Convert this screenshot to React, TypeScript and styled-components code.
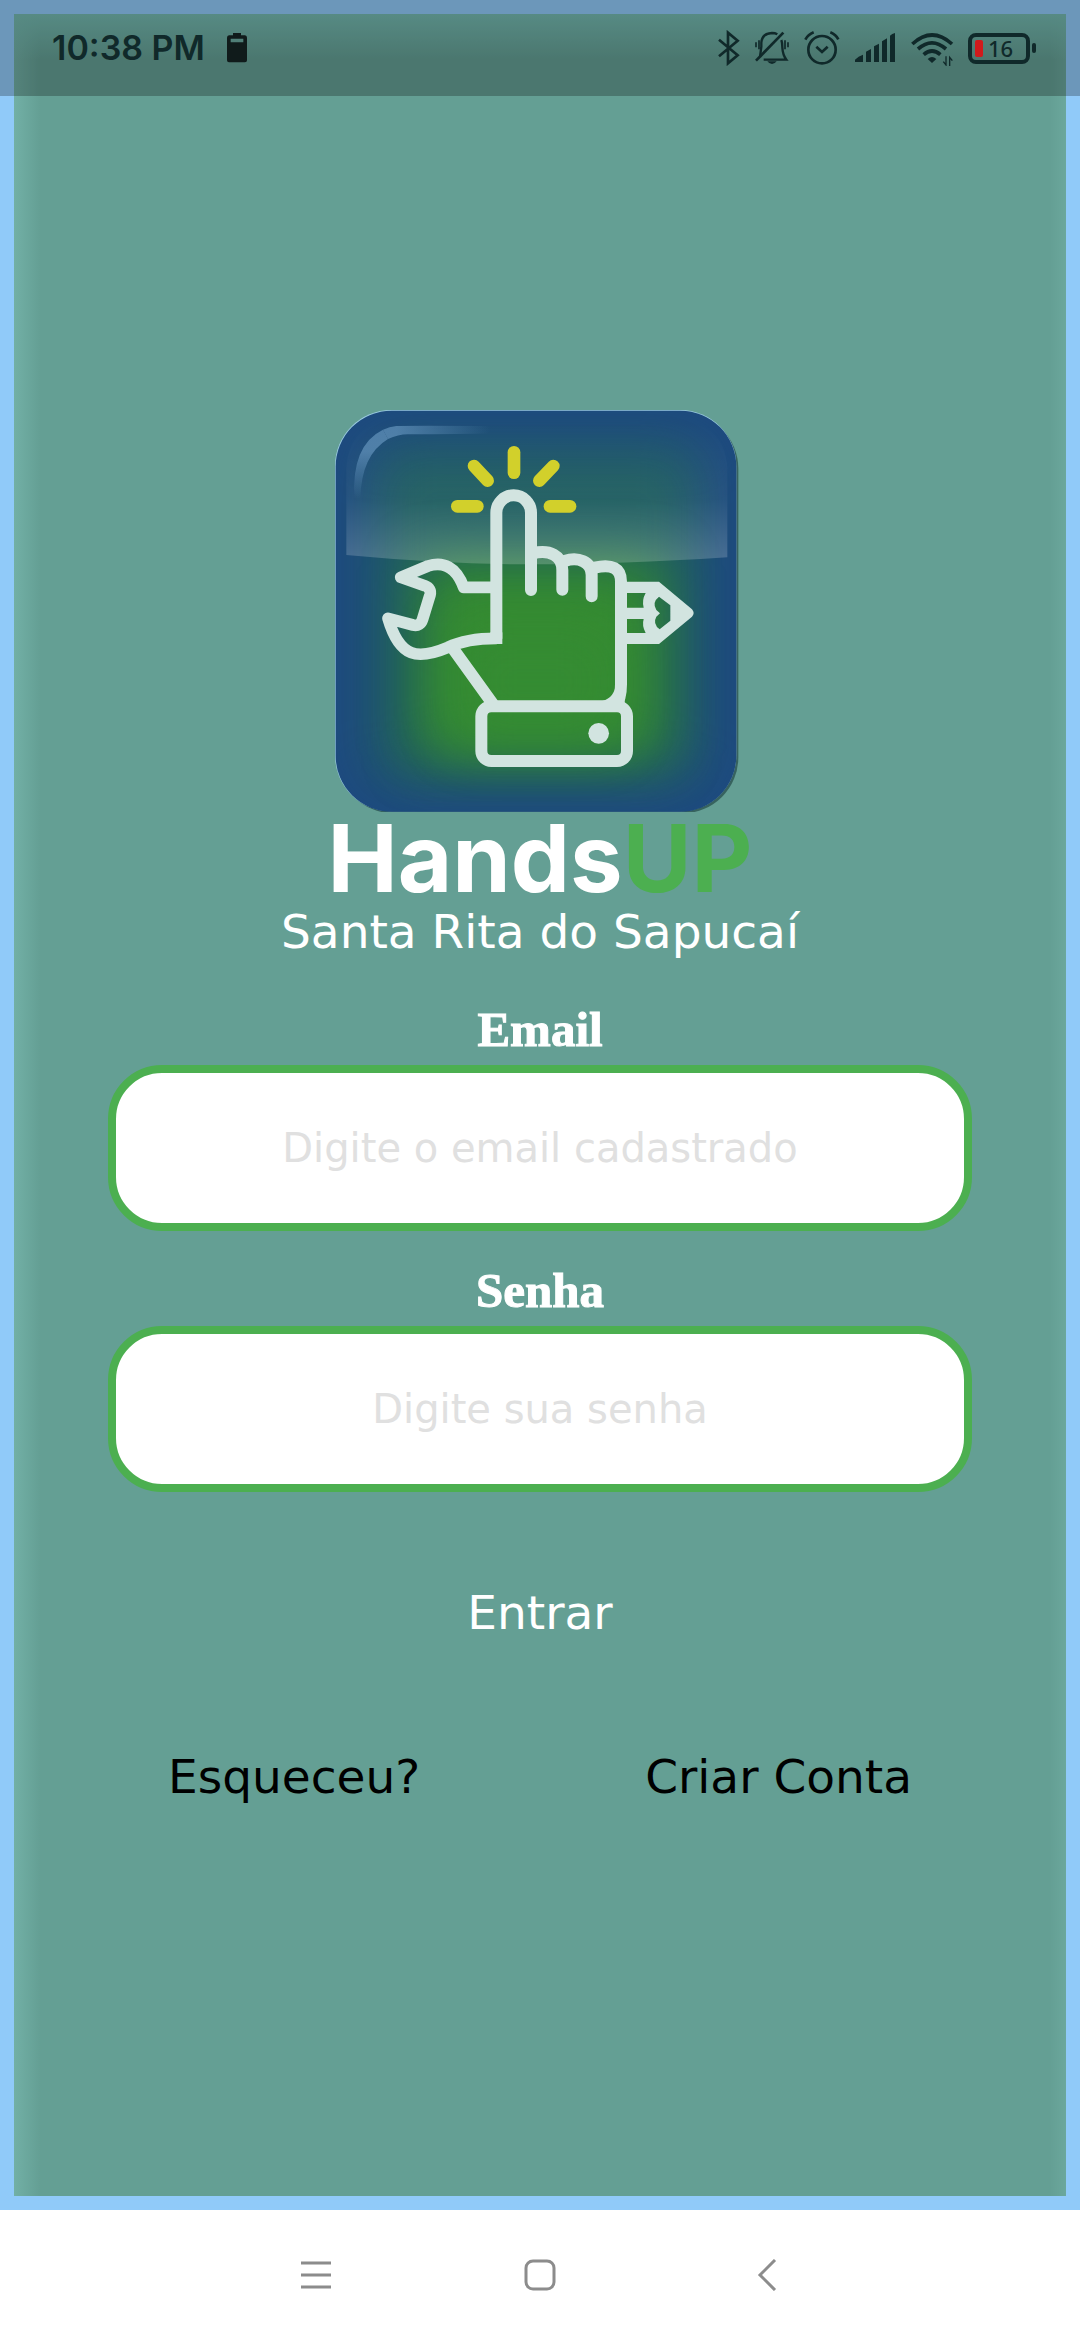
import React from "react";
import styled, { createGlobalStyle } from "styled-components";

const INK = "#10292a";
const TECH = '"DejaVu Sans", Verdana, sans-serif';

const GlobalStyle = createGlobalStyle`
  *, *::before, *::after { box-sizing: border-box; }
  body { margin: 0; background: #fff; }
`;

const Screen = styled.div`
  position: relative;
  display: flex;
  flex-direction: column;
  min-height: 100vh;
  font-family: ${TECH};
`;

const StatusBar = styled.header`
  position: absolute;
  inset: 0 0 auto 0;
  height: 96px;
  padding: 0 44px 0 52px;
  display: flex;
  align-items: center;
  justify-content: space-between;
  background: rgba(0, 0, 0, 0.25);
  color: ${INK};
`;

const StatusGroup = styled.div<{ $gap: number }>`
  display: flex;
  align-items: center;
  gap: ${(p) => p.$gap}px;
`;

const Clock = styled.time`
  font: 600 34px/40px Inter, Roboto, sans-serif;
`;

const Battery = styled.div`
  display: flex;
  align-items: center;
  gap: 2px;
  &::after {
    content: "";
    width: 4px;
    height: 10px;
    border-radius: 2px;
    background: ${INK};
  }
`;

const BatteryCell = styled.div`
  display: flex;
  align-items: center;
  gap: 5px;
  width: 62px;
  height: 31px;
  padding-left: 3px;
  border: 4px solid ${INK};
  border-radius: 8px;
  font: 500 22px/22px "Noto Sans", sans-serif;
  &::before {
    content: "";
    width: 8px;
    height: 17px;
    border-radius: 2px;
    background: #d01a1c;
  }
`;

const Frame = styled.main`
  flex: 1;
  padding: 396px 94px 60px;
  border: 14px solid #90caf9;
  background:
    linear-gradient(to bottom, #74b9b0, rgba(116, 185, 176, 0) 46px),
    linear-gradient(to right, #72b0a6, rgba(114, 176, 166, 0) 26px),
    linear-gradient(to left, #6ba79c, rgba(107, 167, 156, 0) 16px),
    #649f94;
`;

const Brand = styled.section`
  display: flex;
  flex-direction: column;
  align-items: center;
  margin-bottom: 35px;
  color: #fff;
  svg { display: block; }
`;

const Title = styled.h1`
  margin: 0;
  font: 700 94px/92px Inter, sans-serif;
  span { color: #4caf50; }
`;

const Tagline = styled.p`
  margin: 0;
  font-size: 47px;
  line-height: 56px;
`;

const Form = styled.form`
  display: flex;
  flex-direction: column;
  align-items: stretch;
`;

const Field = styled.div`
  display: flex;
  flex-direction: column;
  margin-bottom: 25px;
`;

const Label = styled.label`
  color: #fff;
  text-align: center;
  font: 700 49px/70px "Liberation Serif", "Times New Roman", serif;
  -webkit-text-stroke: 1px #fff;
`;

const Input = styled.input`
  width: 100%;
  height: 166px;
  padding: 0 24px;
  border: 8px solid #4caf50;
  border-radius: 54px;
  background: #fff;
  color: #333;
  text-align: center;
  font: 400 40px/48px ${TECH};
  &::placeholder { color: #e0e0e0; opacity: 1; }
`;

const TextButton = styled.button<{ $tone: string }>`
  height: 80px;
  padding: 0;
  border: 0;
  background: none;
  color: ${(p) => p.$tone};
  font: 400 47px/56px ${TECH};
  cursor: pointer;
`;

const Submit = styled(TextButton)`
  align-self: center;
  margin: 56px 0 84px;
`;

const Actions = styled.div`
  display: flex;
  justify-content: space-between;
  padding: 0 60px;
`;

const NavBar = styled.nav`
  display: flex;
  align-items: center;
  justify-content: center;
  gap: 128px;
  height: 130px;
  background: #fff;
`;

const NavButton = styled.button`
  display: grid;
  place-items: center;
  width: 96px;
  height: 96px;
  padding: 0;
  border: 0;
  background: none;
  color: #8c8c8c;
`;

type GlyphProps = { x: number; w: number; children: React.ReactNode };

const Glyph = ({ x, w, children }: GlyphProps) => (
  <svg
    width={w / 3}
    height={36}
    viewBox={`${x} 90 ${w} 108`}
    fill="none"
    stroke={INK}
    strokeWidth={8}
    aria-hidden="true"
  >
    {children}
  </svg>
);

const StatusIcons = () => (
  <>
    <Glyph x={78} w={69}>
      <path d="M84 119 140 166 111 190V98L140 122 84 169" strokeLinejoin="miter" />
    </Glyph>
    <Glyph x={189} w={108}>
      <path d="M207 171 211 140V128Q213 100 243 99Q252 99 259 103M271 120Q274 128 274 142Q275 164 286 179H218" strokeWidth={7} />
      <path d="M195 182 277 98" />
      <path d="M229 184H257Q251 192 243 192T229 184Z" fill={INK} stroke="none" />
      <path d="M195 127V142M204 121V148M282 121V148M291 127V142" strokeWidth={5} />
    </Glyph>
    <Glyph x={342} w={108}>
      <circle cx="396" cy="149" r="41" />
      <path d="M379 140 396 156 413 140" />
      <path d="M346 119Q354 104 371 97M421 97Q438 104 445 118" />
    </Glyph>
    <Glyph x={486} w={126}>
      <g fill={INK} stroke="none">
        <path d="M489 186V179Q499 168 513 164V186ZM522 186V155L537 147V186ZM546 186V139L561 131V186ZM570 186V124L585 115V186ZM594 186V107Q600 101 609 99V186Z" />
      </g>
    </Glyph>
    <Glyph x={654} w={132}>
      <path d="M661 132Q720 78 780 132" strokeWidth={11} />
      <path d="M678 147Q720 110 762 147" strokeWidth={11} />
      <path d="M695 164Q720 142 745 164" strokeWidth={11} />
      <path d="M707 177Q720 165 733 177L720 189Z" fill={INK} stroke="none" />
      <path d="M762 169V195L754 185M773 198V172L781 182" strokeWidth={4} />
    </Glyph>
  </>
);

const rays = ["M583 172V233", "M463 213 504 257", "M701 213 659 257", "M413 334H473", "M691 334H751"];

const Logo = () => (
  <svg width="410" height="402" viewBox="46 45 1230 1206" role="img" aria-label="HandsUP">
    <defs>
      <clipPath id="tile"><rect x="48" y="47" width="1202" height="1203" rx="168" /></clipPath>
      <filter id="glow" x="-50%" y="-50%" width="200%" height="200%" colorInterpolationFilters="sRGB">
        <feGaussianBlur stdDeviation="80" />
      </filter>
      <linearGradient id="gloss" x1="0" y1="0" x2="0" y2="1">
        <stop offset="0" stopColor="#fff" stopOpacity="0" />
        <stop offset="0.55" stopColor="#fff" stopOpacity="0.04" />
        <stop offset="1" stopColor="#fff" stopOpacity="0.2" />
      </linearGradient>
      <linearGradient id="shine" gradientUnits="userSpaceOnUse" x1="230" y1="100" x2="510" y2="100">
        <stop offset="0" stopColor="#5f8fb8" stopOpacity="0.75" />
        <stop offset="1" stopColor="#5f8fb8" stopOpacity="0" />
      </linearGradient>
      <linearGradient id="shineDown" gradientUnits="userSpaceOnUse" x1="100" y1="170" x2="100" y2="310">
        <stop offset="0" stopColor="#5f8fb8" stopOpacity="0.75" />
        <stop offset="1" stopColor="#5f8fb8" stopOpacity="0" />
      </linearGradient>
    </defs>
    <rect x="54" y="53" width="1202" height="1202" rx="168" fill="#37635f" />
    <rect x="46" y="45" width="1204" height="1204" rx="168" fill="#9ccbe2" />
    <g clipPath="url(#tile)">
      <rect x="46" y="45" width="1206" height="1208" fill="#1e4a80" />
      <rect x="160" y="150" width="980" height="1010" rx="60" fill="#1f605c" opacity="0.9" filter="url(#glow)" />
      <rect x="300" y="500" width="730" height="590" rx="40" fill="#358b31" filter="url(#glow)" />
      <rect x="400" y="680" width="500" height="360" rx="40" fill="#358c33" opacity="0.9" filter="url(#glow)" />
      <path d="M80 480V220Q90 75 240 75H1060Q1215 80 1223 220V487Q900 508 640 508T80 480Z" fill="url(#gloss)" />
      <path d="M230 93Q270 92 520 93V115Q420 118 265 118Q235 118 205 132L190 104Q210 95 230 93Z" fill="url(#shine)" />
      <path d="M190 104 205 132Q125 180 122 310H104Q95 150 190 104Z" fill="url(#shineDown)" />
    </g>
    <g fill="none" stroke="#d2d02b" strokeWidth="38" strokeLinecap="round">
      {rays.map((d) => <path key={d} d={d} />)}
    </g>
    <g fill="none" stroke="#d2e4e0" strokeWidth="36" strokeLinecap="round" strokeLinejoin="round">
      <path d="M634 585V353A52 52 0 0 0 530 353V728" />
      <path d="M640 475C690 463 728 482 728 525V584" />
      <path d="M735 498C775 484 816 500 816 540V604" />
      <path d="M825 518Q904 500 904 560V868Q904 912 888 930" />
      <path d="M520 577H432C410 515 370 498 325 513L243 547 315 572Q336 580 331 600L309 672Q302 695 280 690L205 670C240 790 295 795 385 757Q440 730 530 730" strokeWidth="35" />
      <path d="M403 765 518 925" />
      <rect x="485" y="934" width="437" height="164" rx="30" />
    </g>
    <g fill="#d2e4e0">
      <path d="M512 712H548V747H512Z" />
      <path d="M848 918Q886 908 888 865H915V925H848Z" />
      <circle cx="837" cy="1015" r="31" />
      <path
        fillRule="evenodd"
        d="M915 560H1018L1117 643Q1127 655 1117 665L1018 747H915ZM922 594V638H972Q966 615 978 594ZM922 672V714H978Q966 692 972 672ZM1018 605Q996 622 1010 645L1021 655 1010 665Q998 686 1020 703L1052 677V631Z"
      />
    </g>
  </svg>
);

export default function App() {
  return (
    <Screen>
      <GlobalStyle />
      <Frame>
        <Brand>
          <Logo />
          <Title>Hands<span>UP</span></Title>
          <Tagline>Santa Rita do Sapucaí</Tagline>
        </Brand>
        <Form onSubmit={(e) => e.preventDefault()}>
          <Field>
            <Label htmlFor="email">Email</Label>
            <Input id="email" type="email" placeholder="Digite o email cadastrado" />
          </Field>
          <Field>
            <Label htmlFor="senha">Senha</Label>
            <Input id="senha" type="password" placeholder="Digite sua senha" />
          </Field>
          <Submit type="submit" $tone="#fff">Entrar</Submit>
          <Actions>
            <TextButton type="button" $tone="#000">Esqueceu?</TextButton>
            <TextButton type="button" $tone="#000">Criar Conta</TextButton>
          </Actions>
        </Form>
      </Frame>

      <NavBar aria-label="Sistema">
        <NavButton type="button" aria-label="Recentes">
          <svg width="32" height="32" fill="none" stroke="currentColor" strokeWidth="3">
            <path d="M1 4H31M1 16H31M1 28H31" />
          </svg>
        </NavButton>
        <NavButton type="button" aria-label="Início">
          <svg width="32" height="32" fill="none" stroke="currentColor" strokeWidth="3">
            <rect x="2" y="2" width="28" height="28" rx="7" />
          </svg>
        </NavButton>
        <NavButton type="button" aria-label="Voltar">
          <svg width="32" height="32" fill="none" stroke="currentColor" strokeWidth="3">
            <path d="M27 1 12 16 27 31" />
          </svg>
        </NavButton>
      </NavBar>

      <StatusBar>
        <StatusGroup $gap={22}>
          <Clock>10:38 PM</Clock>
          <svg width="20" height="30" viewBox="0 0 60 90" aria-hidden="true">
            <path d="M18 0H42V7H54Q60 8 60 14V82Q60 88 54 88H6Q0 88 0 82V14Q0 8 6 7H18ZM11 17V28H49V17Z" fill="#101b1b" fillRule="evenodd" />
          </svg>
        </StatusGroup>
        <StatusGroup $gap={14}>
          <StatusIcons />
          <Battery><BatteryCell>16</BatteryCell></Battery>
        </StatusGroup>
      </StatusBar>
    </Screen>
  );
}
